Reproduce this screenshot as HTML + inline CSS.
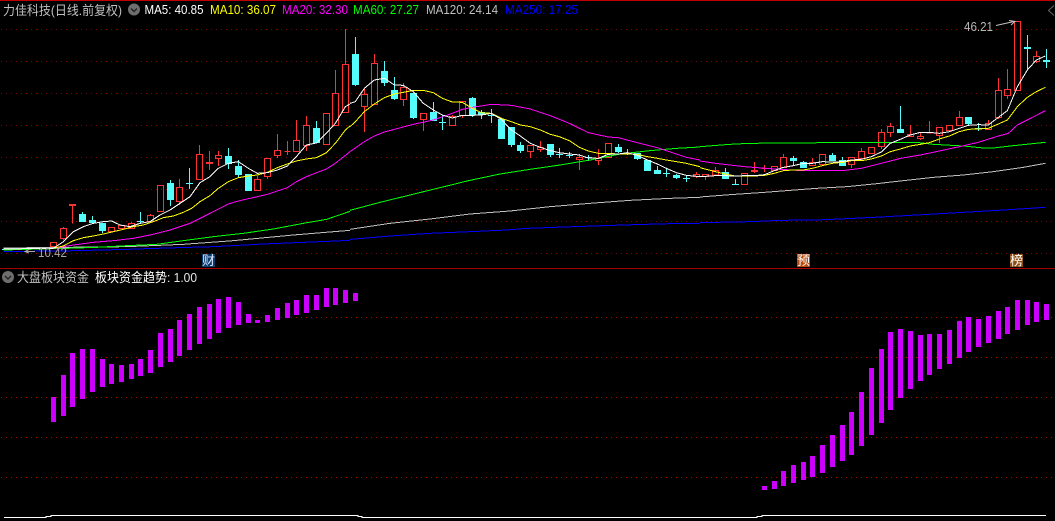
<!DOCTYPE html>
<html><head><meta charset="utf-8"><style>
html,body{margin:0;padding:0;background:#000;width:1055px;height:521px;overflow:hidden}
svg{display:block}
text{font-family:"Liberation Sans","WenQuanYi Zen Hei","Noto Sans CJK SC",sans-serif;font-size:13px}
.cj{font-family:"Liberation Sans","WenQuanYi Zen Hei","Noto Sans CJK SC",sans-serif;font-size:13px}
</style></head><body>
<svg width="1055" height="521" viewBox="0 0 1055 521" xmlns="http://www.w3.org/2000/svg">
<rect width="1055" height="521" fill="#000"/>
<rect x="0" y="0" width="1055" height="1" fill="#c00000"/>
<rect x="0" y="268" width="1055" height="1" fill="#a80000"/>
<g stroke="#800000" stroke-width="1" stroke-dasharray="1 4" shape-rendering="crispEdges">
<path d="M1 29.5H1055M1 61.5H1055M1 93.5H1055M1 125.5H1055M1 157.5H1055M1 189.5H1055M1 221.5H1055M1 253.5H1055"/>
</g>
<g stroke="#b00000" stroke-width="1" stroke-dasharray="1 4" shape-rendering="crispEdges">
<path d="M1 317.5H1055M1 357.5H1055M1 397.5H1055M1 437.5H1055M1 477.5H1055"/>
</g>

<g shape-rendering="crispEdges">
<path fill="none" stroke="#ff3232" stroke-width="1" d="
M21 248.5H28
M50.5 242.5H56.5V246.5H50.5Z
M60.5 228.5H66.5V238.5H60.5ZM63.5 227V228M63.5 239V240
M69.5 204.5H75.5V205.5H69.5ZM72.5 206V223.5
M108.5 227.5H114.5V231.5H108.5Z
M118.5 225.5H124.5V228.5H118.5Z
M128.5 223.5H134.5V228.5H128.5ZM131.5 222V223
M147.5 215.5H153.5V221.5H147.5ZM150.5 214V215
M157.5 185.5H163.5V211.5H157.5Z
M176.5 187.5H182.5V201.5H176.5ZM179.5 179V187M179.5 202V205
M196.5 154.5H202.5V179.5H196.5ZM199.5 145V154
M206.5 162.5H212.5V163.5H206.5ZM209.5 151V162M209.5 164V170
M215.5 155.5H221.5V158.5H215.5ZM218.5 151V155M218.5 159V166
M254.5 179.5H260.5V190.5H254.5ZM257.5 176V179
M264.5 158.5H270.5V176.5H264.5ZM267.5 177V179
M274.5 150.5H280.5V155.5H274.5ZM277.5 134V150M277.5 156V158
M284.5 151.5H290.5M287.5 141V155
M293.5 140.5H299.5V151.5H293.5ZM296.5 120V140
M303.5 125.5H309.5V145.5H303.5ZM306.5 116V125M306.5 146V151
M323.5 113.5H329.5V144.5H323.5Z
M332.5 93.5H338.5V125.5H332.5ZM335.5 70V93
M342.5 64.5H348.5V112.5H342.5ZM345.5 29V64
M361.5 94.5H367.5V106.5H361.5ZM364.5 88V94M364.5 107V132
M371.5 63.5H377.5V104.5H371.5ZM374.5 54V63
M400.5 87.5H406.5V99.5H400.5ZM403.5 83V87M403.5 100V106
M420.5 113.5H426.5V119.5H420.5ZM423.5 120V131
M449.5 116.5H455.5V125.5H449.5ZM452.5 115V116
M459.5 101.5H465.5V115.5H459.5ZM462.5 116V118
M527.5 145.5H533.5V151.5H527.5ZM530.5 152V158
M537.5 147.5H543.5V149.5H537.5ZM540.5 141V147M540.5 150V152
M576.5 157.5H582.5V159.5H576.5ZM579.5 154V157M579.5 160V170
M595.5 158.5H601.5V160.5H595.5ZM598.5 149V158M598.5 161V165
M605.5 143.5H611.5V157.5H605.5Z
M693.5 174.5H699.5V176.5H693.5ZM696.5 172V174M696.5 177V178
M702.5 174.5H708.5V176.5H702.5ZM705.5 177V180
M712.5 170.5H718.5V175H712.5ZM715.5 167V170
M741.5 173.5H747.5V184.5H741.5Z
M751.5 170.5H757.5V171.5H751.5ZM754.5 162V170M754.5 172V173
M761.5 168.5H767.5M764.5 165V172
M771.5 166.5H777.5V170.5H771.5Z
M780.5 157.5H786.5V167.5H780.5ZM783.5 154V157
M809.5 162.5H815.5V165.5H809.5ZM812.5 158V162
M819.5 154.5H825.5V164.5H819.5Z
M848.5 157.5H854.5V164.5H848.5ZM851.5 165V168
M858.5 151.5H864.5V158.5H858.5ZM861.5 148V151
M868.5 147.5H874.5V153.5H868.5Z
M878.5 132.5H884.5V146.5H878.5ZM881.5 129V132M881.5 147V149
M887.5 126.5H893.5V132.5H887.5ZM890.5 123V126M890.5 133V137
M907.5 134.5H913.5V136.5H907.5ZM910.5 125V134
M917.5 136.5H923.5V138.5H917.5ZM920.5 132V136M920.5 139V140
M926.5 133H932.5M929.5 121V133
M936.5 127.5H942.5V135.5H936.5ZM939.5 136V143
M946.5 125.5H952.5V130.5H946.5Z
M956.5 117.5H962.5V125.5H956.5ZM959.5 111V117
M985.5 123.5H991.5V129.5H985.5ZM988.5 120V123
M995.5 90.5H1001.5V117.5H995.5ZM998.5 78V90M998.5 118V119
M1004.5 89.5H1010.5V95.5H1004.5ZM1007.5 69V89M1007.5 96V99
M1014.5 21.5H1020.5V90.5H1014.5Z
M1033.5 56.5H1039.5V61.5H1033.5ZM1036.5 51V56M1036.5 62V63
"/>
<path fill="none" stroke="#54fcfc" stroke-width="1" d="
M2 249.5H18
M82.5 212V214M92.5 216V220M102.5 231V233
M137 221.5H144M140.5 212V224
M170.5 180V183M170.5 200V206
M186 183.5H193M189.5 168V189
M228.5 148V156M228.5 164V169
M238.5 160V166M238.5 175V178
M316.5 121V128
M355.5 37V54M355.5 85V86
M384.5 61V71M384.5 83V86
M394.5 77V90M394.5 99V100
M413.5 118V119
M433.5 102V112
M439 122.5H446M442.5 115V130
M472.5 97V98M472.5 115V117
M481.5 110V112M481.5 115V119
M488 115.5H495M491.5 109V123
M511.5 145V147
M520.5 142V145M520.5 151V153
M550.5 155V157
M556 154.5H563M559.5 148V158
M566 155.5H573M569.5 152V158
M585 157.5H592M588.5 155V161
M618.5 144V147M618.5 152V153
M624 153.5H631M627.5 149V155
M637.5 159V160
M657.5 166V170
M663 173.5H670M666.5 168V177
M676.5 174V175M676.5 178V179
M683 178.5H690M686.5 175V182
M725.5 168V172
M732 184.5H739M735.5 179V184
M793.5 156V158M793.5 161V165
M803.5 161V162
M832.5 153V155
M842.5 157V160
M900.5 106V129
M968.5 124V126
M975 128.5H982M978.5 123V131
M1027.5 35V47M1027.5 49V70
M1046.5 49V60M1046.5 62V68
"/>
<g fill="#54fcfc">
<rect x="79" y="214" width="7" height="8"/><rect x="89" y="220" width="7" height="3"/><rect x="99" y="223" width="7" height="8"/>
<rect x="167" y="183" width="7" height="17"/><rect x="225" y="156" width="7" height="8"/><rect x="235" y="166" width="7" height="9"/>
<rect x="245" y="174" width="7" height="17"/><rect x="313" y="128" width="7" height="15"/><rect x="352" y="54" width="7" height="31"/>
<rect x="381" y="71" width="7" height="12"/><rect x="391" y="90" width="7" height="9"/><rect x="410" y="93" width="7" height="25"/>
<rect x="430" y="112" width="7" height="9"/><rect x="469" y="98" width="7" height="17"/><rect x="478" y="112" width="7" height="3"/>
<rect x="498" y="119" width="7" height="20"/><rect x="508" y="127" width="7" height="18"/><rect x="517" y="145" width="7" height="6"/>
<rect x="547" y="144" width="7" height="11"/><rect x="615" y="147" width="7" height="5"/><rect x="634" y="153" width="7" height="6"/>
<rect x="644" y="160" width="7" height="11"/><rect x="654" y="170" width="7" height="4"/><rect x="673" y="175" width="7" height="3"/>
<rect x="722" y="172" width="7" height="7"/><rect x="790" y="158" width="7" height="3"/><rect x="800" y="162" width="7" height="6"/>
<rect x="829" y="155" width="7" height="6"/><rect x="839" y="160" width="7" height="6"/><rect x="897" y="129" width="7" height="4"/>
<rect x="965" y="117" width="7" height="7"/><rect x="1024" y="47" width="7" height="2"/><rect x="1043" y="60" width="7" height="2"/>
</g>
</g>

<g fill="none" stroke-width="3" stroke-linejoin="round" shape-rendering="crispEdges">
<g transform="scale(.33333)">
<polyline stroke="#0000ff" points="10,755 230,752 380,748 500,744 640,740 790,732 960,725 1050,721"/>
<polyline stroke="#c0c0c0" points="10,744 200,742 380,740 550,733 700,722 880,705 1050,691"/>
<polyline stroke="#00ff00" points="10,750 200,745 290,742 380,737 470,733 550,722 640,710 730,700 820,687 910,670 980,658 1050,634"/>
<polyline stroke="#ff00ff" points="160,745 220,735 280,727 340,722 400,715 450,705 510,690 570,670 630,640 685,612 715,603 772,590 802,583 862,563 889,545 919,530 979,507 1006,490 1050,455"/>
<polyline stroke="#ffff00" points="160,745 190,738 220,722 250,713 280,708 310,702 340,695 370,688 400,680 430,675 460,665 490,653 520,648 550,637 575,625 600,605 630,587 655,565 685,545 715,533 745,528 772,525 802,517 832,503 862,492 889,483 919,477 949,473 979,458 1006,430 1036,390 1050,378"/>
<polyline stroke="#ffffff" points="10,747 160,745 190,725 220,695 250,680 280,670 310,665 335,663 360,675 390,680 420,670 450,665 480,645 510,630 540,610 570,590 600,548 630,530 655,505 685,490 715,485 745,505 772,520 802,518 832,510 862,498 889,470 919,435 949,429 979,400 1006,370 1036,320 1050,312"/>
</g>
<g transform="translate(350,0) scale(.33333)">
<polyline stroke="#0000ff" points="0,718 120,708 240,700 360,695 470,690 530,685 670,680 850,674 960,671 1050,670"/>
<polyline stroke="#c0c0c0" points="0,688 120,670 240,657 360,642 480,633 600,620 720,610 840,601 960,595 1050,592"/>
<polyline stroke="#00ff00" points="0,631 90,607 180,585 270,563 360,541 450,522 540,508 630,495 720,480 810,462 900,452 980,445 1050,441"/>
<polyline stroke="#ff00ff" points="0,455 43,425 73,408 103,396 133,388 190,373 250,360 307,340 337,328 367,322 424,313 484,316 541,327 601,347 658,370 715,398 775,411 805,413 862,428 922,443 979,462 1009,472 1050,480"/>
<polyline stroke="#ffff00" points="0,380 16,365 43,335 73,312 103,293 133,282 160,277 190,271 220,271 250,278 277,295 307,306 337,307 367,325 394,338 424,340 454,355 484,365 511,375 541,380 571,390 601,403 628,410 658,422 688,442 715,453 745,460 775,460 805,462 832,462 862,463 892,470 922,475 949,480 979,485 1009,490 1050,500"/>
<polyline stroke="#ffffff" points="0,310 16,305 43,265 73,240 103,235 133,255 160,256 190,275 220,310 250,330 277,345 307,354 337,346 367,346 394,345 424,340 454,358 484,390 511,408 541,430 571,442 601,452 628,458 658,462 688,465 715,474 745,475 775,463 805,462 832,458 862,466 892,480 922,492 949,505 979,518 1009,526 1050,530"/>
</g>
<g transform="translate(700,0) scale(.33333)">
<polyline stroke="#0000ff" points="0,668 150,665 240,661 350,660 440,656 560,650 650,645 790,637 910,630 1036,622"/>
<polyline stroke="#c0c0c0" points="0,591 90,584 180,578 350,565 440,560 530,551 610,542 700,532 790,525 880,515 970,502 1036,490"/>
<polyline stroke="#00ff00" points="0,440 90,433 148,430 380,428 650,427 700,433 790,438 850,444 880,444 940,437 1036,427"/>
<polyline stroke="#ff00ff" points="0,483 46,490 133,500 223,507 310,512 367,512 427,512 484,505 544,490 601,475 661,465 718,453 778,440 835,427 895,408 925,400 952,375 982,360 1036,332"/>
<polyline stroke="#ffff00" points="0,503 46,515 76,522 106,528 133,528 163,528 193,526 223,520 250,512 280,510 310,510 337,505 367,497 397,490 427,487 454,482 484,482 514,477 544,468 571,455 601,447 631,438 661,433 688,428 718,417 748,408 778,395 805,388 835,387 865,385 895,372 922,360 952,320 982,292 1009,275 1036,262"/>
<polyline stroke="#ffffff" points="0,530 46,527 76,527 106,528 133,527 163,527 193,524 223,512 250,502 280,497 310,490 337,490 367,485 397,486 427,485 454,480 484,478 514,470 544,456 571,430 601,418 631,405 661,397 688,397 718,400 748,395 778,385 805,376 835,374 865,375 895,352 922,332 952,260 982,210 1009,180 1036,168"/>
</g>
</g>

<g fill="#cc00ff" shape-rendering="crispEdges">
<rect x="51" y="397" width="5" height="25"/><rect x="61" y="375" width="5" height="41"/><rect x="70" y="353" width="5" height="54"/><rect x="80" y="349" width="5" height="50"/><rect x="90" y="349" width="5" height="43"/><rect x="100" y="359" width="5" height="28"/><rect x="109" y="364" width="5" height="20"/><rect x="119" y="365" width="5" height="17"/><rect x="129" y="364" width="5" height="15"/><rect x="138" y="359" width="5" height="17"/><rect x="148" y="350" width="5" height="23"/><rect x="158" y="333" width="5" height="34"/><rect x="168" y="329" width="5" height="33"/><rect x="177" y="320" width="5" height="36"/><rect x="187" y="314" width="5" height="36"/><rect x="197" y="307" width="5" height="37"/><rect x="207" y="304" width="5" height="35"/><rect x="216" y="299" width="5" height="34"/><rect x="226" y="297" width="5" height="31"/><rect x="236" y="302" width="5" height="23"/><rect x="246" y="314" width="5" height="9"/><rect x="255" y="320" width="5" height="3"/><rect x="265" y="315" width="5" height="7"/><rect x="275" y="308" width="5" height="12"/><rect x="285" y="303" width="5" height="15"/><rect x="294" y="300" width="5" height="15"/><rect x="304" y="295" width="5" height="18"/><rect x="314" y="295" width="5" height="15"/><rect x="324" y="288" width="5" height="19"/><rect x="333" y="288" width="5" height="17"/><rect x="343" y="290" width="5" height="13"/><rect x="353" y="293" width="5" height="8"/>
<rect x="762" y="486" width="5" height="4"/><rect x="772" y="481" width="5" height="8"/><rect x="781" y="471" width="5" height="15"/><rect x="791" y="465" width="5" height="18"/><rect x="801" y="462" width="5" height="18"/><rect x="810" y="456" width="5" height="21"/><rect x="820" y="445" width="5" height="28"/><rect x="830" y="435" width="5" height="32"/><rect x="840" y="425" width="5" height="36"/><rect x="849" y="412" width="5" height="43"/><rect x="859" y="392" width="5" height="54"/><rect x="869" y="368" width="5" height="67"/><rect x="879" y="349" width="5" height="74"/><rect x="888" y="332" width="5" height="78"/><rect x="898" y="329" width="5" height="69"/><rect x="908" y="331" width="5" height="58"/><rect x="918" y="335" width="5" height="46"/><rect x="927" y="334" width="5" height="41"/><rect x="937" y="334" width="5" height="35"/><rect x="947" y="330" width="5" height="34"/><rect x="957" y="321" width="5" height="37"/><rect x="966" y="317" width="5" height="35"/><rect x="976" y="319" width="5" height="28"/><rect x="986" y="316" width="5" height="27"/><rect x="996" y="311" width="5" height="28"/><rect x="1005" y="307" width="5" height="27"/><rect x="1015" y="300" width="5" height="30"/><rect x="1025" y="300" width="5" height="25"/><rect x="1034" y="302" width="5" height="20"/><rect x="1044" y="304" width="5" height="16"/>
</g>

<path fill="none" stroke="#fff" stroke-width="1" shape-rendering="crispEdges" d="M4 517.5H46V516.5H51V515.5H358V516.5H362V517.5H757V516.5H762V515.5H1046"/>

<circle cx="134" cy="9.5" r="6" fill="#6e6e6e"/>
<path d="M131 8.5L134 11.5L137 8.5" fill="none" stroke="#222" stroke-width="1.4"/>
<circle cx="8" cy="277" r="6" fill="#6e6e6e"/>
<path d="M5 276L8 279L11 276" fill="none" stroke="#222" stroke-width="1.4"/>
<path d="M1054 5.5L1048.5 10.5L1054 15.5" fill="none" stroke="#666" stroke-width="1"/>

<text class="cj" x="3" y="15" fill="#c0c0c0" textLength="119" lengthAdjust="spacingAndGlyphs">力佳科技(日线.前复权)</text>
<text x="144.5" y="14" fill="#ffffff" textLength="59" lengthAdjust="spacingAndGlyphs">MA5: 40.85</text>
<text x="210" y="14" fill="#ffff00" textLength="66" lengthAdjust="spacingAndGlyphs">MA10: 36.07</text>
<text x="282" y="14" fill="#ff00ff" textLength="66" lengthAdjust="spacingAndGlyphs">MA20: 32.30</text>
<text x="353" y="14" fill="#00ff00" textLength="66" lengthAdjust="spacingAndGlyphs">MA60: 27.27</text>
<text x="426" y="14" fill="#c0c0c0" textLength="72" lengthAdjust="spacingAndGlyphs">MA120: 24.14</text>
<text x="505" y="14" fill="#0000ff" textLength="73" lengthAdjust="spacingAndGlyphs">MA250: 17.25</text>

<text x="964" y="31" fill="#b8b8b8" textLength="29" lengthAdjust="spacingAndGlyphs">46.21</text>
<path d="M996 25.5L1014 21.5M1009 20.5L1015 21.5L1011 25" fill="none" stroke="#c0c0c0" stroke-width="1"/>
<text x="38" y="257" fill="#a8a8a8" textLength="29" lengthAdjust="spacingAndGlyphs">10.42</text>
<path d="M35 251.5H25M29 249.5L25 251.5L29 253" fill="none" stroke="#a8a8a8" stroke-width="1"/>

<rect x="202" y="254" width="13" height="13" fill="#0a3c6e"/>
<text class="cj" x="202" y="265" fill="#dfe8ff">财</text>
<rect x="797" y="254" width="13" height="13" fill="#b84c10"/>
<text class="cj" x="797" y="265" fill="#fff">预</text>
<rect x="1010" y="254" width="13" height="13" fill="#8a4a10"/>
<text class="cj" x="1010" y="265" fill="#fff">榜</text>

<text class="cj" x="17" y="282" fill="#c0c0c0" textLength="72" lengthAdjust="spacingAndGlyphs">大盘板块资金</text>
<text class="cj" x="95" y="282" fill="#ffffff" textLength="72" lengthAdjust="spacingAndGlyphs">板块资金趋势</text>
<text x="167" y="282" fill="#e8e8e8" textLength="30" lengthAdjust="spacingAndGlyphs">: 1.00</text>
</svg>
</body></html>
